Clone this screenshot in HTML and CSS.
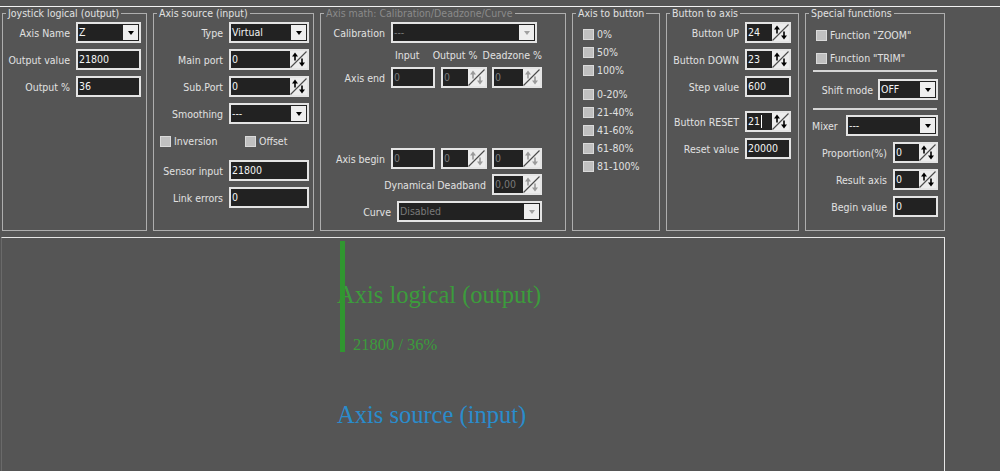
FILE: index.html
```html
<!DOCTYPE html>
<html lang="en">
<head>
    <meta charset="UTF-8">
    <meta name="viewport" content="width=device-width, initial-scale=1.0">
    <link rel="stylesheet" href="styles.css">
    <title>Joystick axis</title>
</head>
<body>
    <!-- shared spin button glyph -->
    <svg class="defs" width="0" height="0">
        <symbol id="spin" viewBox="0 0 17 17">
            <rect width="17" height="17" fill="#ececec"/>
            <line x1="0.5" y1="16.5" x2="16.5" y2="0.5" stroke="#4a4a4a" stroke-width="1.1"/>
            <polygon points="5,1.5 2,5.5 8,5.5" fill="currentColor"/>
            <rect x="4.2" y="5" width="1.6" height="4.5" fill="currentColor"/>
            <polygon points="12,15.5 9,11.5 15,11.5" fill="currentColor"/>
            <rect x="11.2" y="7.5" width="1.6" height="4.5" fill="currentColor"/>
        </symbol>
    </svg>

    <div class="topline"></div>

    <div class="panels">
        <fieldset class="grp g1">
            <legend>Joystick logical (output)</legend>
            <div class="body">
                <div class="row">Axis Name <div class="combo w65"><span class="val">Z</span><span class="drop"></span></div></div>
                <div class="row">Output value <div class="field w65"><span class="val">21800</span></div></div>
                <div class="row">Output % <div class="field w65"><span class="val">36</span></div></div>
            </div>
        </fieldset>

        <fieldset class="grp g2">
            <legend>Axis source (input)</legend>
            <div class="body">
                <div class="row">Type <div class="combo w80"><span class="val">Virtual</span><span class="drop"></span></div></div>
                <div class="row">Main port <div class="spinbox w80"><span class="val">0</span><svg class="spin"><use href="#spin"/></svg></div></div>
                <div class="row">Sub.Port <div class="spinbox w80"><span class="val">0</span><svg class="spin"><use href="#spin"/></svg></div></div>
                <div class="row">Smoothing <div class="combo w80"><span class="val">---</span><span class="drop"></span></div></div>
                <div class="row checks">
                    <label class="chk inv"><span class="box"></span>Inversion</label>
                    <label class="chk"><span class="box"></span>Offset</label>
                </div>
                <div class="row">Sensor input <div class="field w80"><span class="val">21800</span></div></div>
                <div class="row">Link errors <div class="field w80"><span class="val">0</span></div></div>
            </div>
        </fieldset>

        <fieldset class="grp g3 off">
            <legend>Axis math: Calibration/Deadzone/Curve</legend>
            <div class="body">
                <div class="row">
                    <span class="lbl">Calibration</span>
                    <div class="combo w146"><span class="val">---</span><span class="drop"></span></div>
                </div>
                <div class="heads">
                    <span class="h1">Input</span>
                    <span class="h2">Output %</span>
                    <span class="h3">Deadzone %</span>
                </div>
                <div class="row axis-end">
                    <span class="lbl">Axis end</span>
                    <div class="field w44"><span class="val">0</span></div>
                    <div class="spinbox w46"><span class="val">0</span><svg class="spin"><use href="#spin"/></svg></div>
                    <div class="spinbox w50 dz"><span class="val">0</span><svg class="spin"><use href="#spin"/></svg></div>
                </div>
                <div class="row axis-begin">
                    <span class="lbl">Axis begin</span>
                    <div class="field w44"><span class="val">0</span></div>
                    <div class="spinbox w46"><span class="val">0</span><svg class="spin"><use href="#spin"/></svg></div>
                    <div class="spinbox w50 dz"><span class="val">0</span><svg class="spin"><use href="#spin"/></svg></div>
                </div>
                <div class="row right">
                    Dynamical Deadband
                    <div class="spinbox w50"><span class="val">0,00</span><svg class="spin"><use href="#spin"/></svg></div>
                </div>
                <div class="row right">
                    Curve
                    <div class="combo w145"><span class="val">Disabled</span><span class="drop"></span></div>
                </div>
            </div>
        </fieldset>

        <fieldset class="grp g4">
            <legend>Axis to button</legend>
            <div class="body">
                <label class="chk"><span class="box"></span>0%</label>
                <label class="chk"><span class="box"></span>50%</label>
                <label class="chk"><span class="box"></span>100%</label>
                <label class="chk split"><span class="box"></span>0-20%</label>
                <label class="chk"><span class="box"></span>21-40%</label>
                <label class="chk"><span class="box"></span>41-60%</label>
                <label class="chk"><span class="box"></span>61-80%</label>
                <label class="chk"><span class="box"></span>81-100%</label>
            </div>
        </fieldset>

        <fieldset class="grp g5">
            <legend>Button to axis</legend>
            <div class="body">
                <div class="row">Button UP <div class="spinbox w46"><span class="val">24</span><svg class="spin"><use href="#spin"/></svg></div></div>
                <div class="row">Button DOWN <div class="spinbox w46"><span class="val">23</span><svg class="spin"><use href="#spin"/></svg></div></div>
                <div class="row step">Step value <div class="field w46"><span class="val">600</span></div></div>
                <div class="row">Button RESET <div class="spinbox w46"><span class="val">21<span class="caret"></span></span><svg class="spin"><use href="#spin"/></svg></div></div>
                <div class="row">Reset value <div class="field w46"><span class="val">20000</span></div></div>
            </div>
        </fieldset>

        <fieldset class="grp g6">
            <legend>Special functions</legend>
            <div class="body">
                <label class="chk"><span class="box"></span>Function "ZOOM"</label>
                <label class="chk trim"><span class="box"></span>Function "TRIM"</label>
                <div class="sep"></div>
                <div class="row shift">Shift mode <div class="combo w60"><span class="val">OFF</span><span class="drop"></span></div></div>
                <div class="sep sep2"></div>
                <div class="row mixer">Mixer <div class="combo w92"><span class="val">---</span><span class="drop"></span></div></div>
                <div class="row">Proportion(%) <div class="spinbox w45"><span class="val">0</span><svg class="spin"><use href="#spin"/></svg></div></div>
                <div class="row">Result axis <div class="spinbox w45"><span class="val">0</span><svg class="spin"><use href="#spin"/></svg></div></div>
                <div class="row">Begin value <div class="field w45"><span class="val">0</span></div></div>
            </div>
        </fieldset>
    </div>

    <div class="scope">
        <svg class="plot" width="942" height="233">
            <text class="out-title" x="335" y="65">Axis logical (output)</text>
            <rect class="bar" x="338" y="3" width="5" height="111"/>
            <text class="out-value" x="351" y="112">21800 / 36%</text>
            <text class="in-title" x="335" y="185">Axis source (input)</text>
        </svg>
    </div>
</body>
</html>
```

FILE: styles.css
```css
body {
    margin: 0;
    background-color: #555;
    font-family: "DejaVu Sans Condensed", "DejaVu Sans", sans-serif;
    font-stretch: condensed;
    font-size: 10.5px;
    color: #e1e1e1;
}

.defs {
    display: block;
}

.topline {
    height: 1px;
    margin-top: 6px;
    background-color: #f2f2f2;
}

.panels {
    display: flex;
    gap: 6px;
    height: 224px;
    padding-left: 2px;
}

.grp {
    margin: 0;
    padding: 0;
    min-width: 0;
    box-sizing: border-box;
    border: 1px solid #aeaeae;
}

.grp legend {
    margin-left: 3px;
    padding: 0 2px;
    line-height: 13px;
    color: #e1e1e1;
}

.grp.off legend {
    color: #8a8a8a;
}

.g1 { width: 145px; }
.g2 { width: 161px; }
.g3 { width: 246px; }
.g4 { width: 88px; }
.g5 { width: 133px; }
.g6 { width: 140px; }

.body {
    padding-top: 2px;
}

.row {
    display: flex;
    align-items: center;
    justify-content: flex-end;
    gap: 6px;
    height: 21px;
    margin-bottom: 6px;
    white-space: nowrap;
}

/* edit boxes */
.field,
.combo,
.spinbox {
    display: flex;
    flex: none;
    box-sizing: border-box;
    height: 21px;
    border: 2px solid #e4e4e4;
    background-color: #222;
    color: #f4f4f4;
}

.val {
    flex: 1;
    padding-left: 1px;
    line-height: 17px;
    white-space: nowrap;
    overflow: hidden;
}

.caret {
    display: inline-block;
    width: 1px;
    height: 13px;
    margin-left: 1px;
    vertical-align: -3px;
    background-color: #fff;
}

.drop {
    display: flex;
    align-items: center;
    justify-content: center;
    width: 15px;
    margin: 1px;
    background-color: #eee;
}

.drop::before {
    content: "";
    border-left: 3.5px solid transparent;
    border-right: 3.5px solid transparent;
    border-top: 4px solid #000;
}

.spin {
    flex: none;
    width: 17px;
    height: 17px;
    color: #000;
}

.off .val { color: #7a7a7a; }
.off .spin { color: #9a9a9a; }
.off .drop::before { border-top-color: #a0a0a0; }

.w44 { width: 44px; }
.w45 { width: 45px; }
.w46 { width: 46px; }
.w50 { width: 50px; }
.w60 { width: 60px; }
.w65 { width: 65px; }
.w80 { width: 80px; }
.w92 { width: 92px; }
.w145 { width: 145px; }
.w146 { width: 146px; }

/* check boxes */
.chk {
    display: flex;
    align-items: center;
    gap: 3px;
    height: 18px;
    white-space: nowrap;
}

.box {
    flex: none;
    width: 11px;
    height: 11px;
    box-sizing: border-box;
    background-color: #c0c0c0;
    border: 1px solid #dadada;
}

/* group 1 */
.g1 .body { padding-right: 5px; }

/* group 2 */
.g2 .body { padding-right: 4px; }

.g2 .checks {
    justify-content: flex-start;
    gap: 0;
    height: 22px;
    margin-bottom: 8px;
    padding-left: 6px;
}

.g2 .inv { width: 85px; }

/* group 3 */
.g3 .body { padding: 2px 23px 0 6px; }

.g3 .row { justify-content: flex-start; }

.g3 .row.right { justify-content: flex-end; }

.g3 .lbl {
    width: 58px;
    text-align: right;
}

.g3 .dz { margin-left: -1px; }

.heads {
    display: flex;
    height: 13px;
    line-height: 13px;
    margin-bottom: 5px;
    padding-left: 68px;
    white-space: nowrap;
}

.heads .h1 { width: 43px; }
.heads .h2 { width: 57px; }

.g3 .axis-end { margin-bottom: 60px; }
.g3 .axis-begin { margin-bottom: 5px; }

/* group 4 */
.g4 .body { padding: 5px 0 0 10px; }

.g4 .split { margin-top: 6px; }

/* group 5 */
.g5 .body { padding-right: 7px; }

.g5 .step { margin-bottom: 14px; }

/* group 6 */
.g6 .body { padding: 6px 6px 0 6px; }

.g6 .chk { margin-left: 4px; }

.g6 .trim { margin-top: 5px; }

.sep {
    height: 2px;
    margin: 3px 1px 0 1px;
    background-color: #d6d6d6;
}

.g6 .shift {
    margin-top: 7px;
    margin-bottom: 0;
    gap: 5px;
}

.g6 .sep2 { margin-top: 8px; }

.g6 .mixer {
    justify-content: space-between;
    margin-top: 5px;
}

/* lower drawing area */
.scope {
    width: 944px;
    height: 234px;
    margin: 6px 0 0 1px;
    box-sizing: border-box;
    border: 1px solid #e6e6e6;
    border-left-color: #6a6a6a;
    border-bottom: none;
}

.plot {
    display: block;
    font-family: "Liberation Serif", serif;
}

.bar {
    fill: #309630;
}

.out-title {
    font-size: 24.5px;
    fill: #3c9c3c;
}

.out-value {
    font-size: 16.5px;
    fill: #3c9c3c;
}

.in-title {
    font-size: 24.5px;
    fill: #2a8ccc;
}
```
